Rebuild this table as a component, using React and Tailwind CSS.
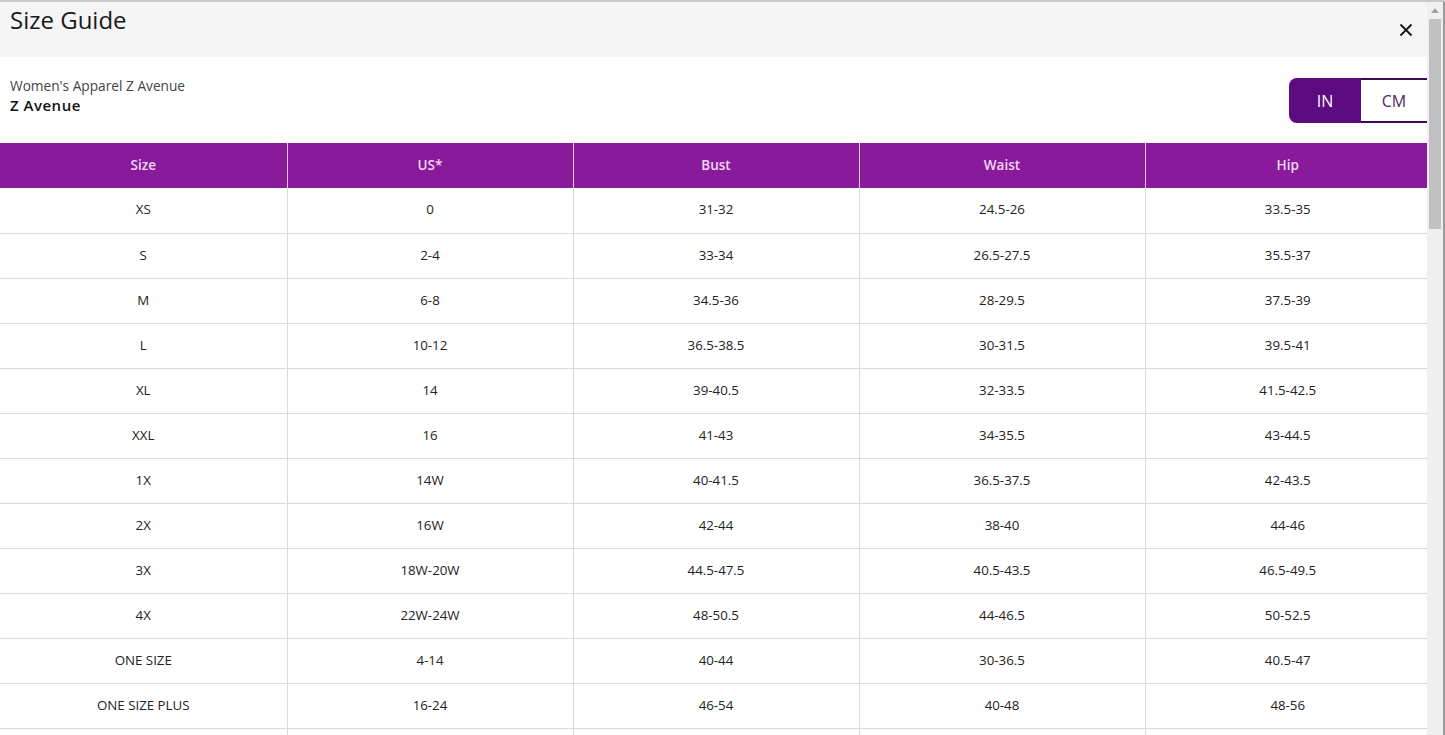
import React from "react";

const rows = [
  ["XS", "0", "31-32", "24.5-26", "33.5-35"],
  ["S", "2-4", "33-34", "26.5-27.5", "35.5-37"],
  ["M", "6-8", "34.5-36", "28-29.5", "37.5-39"],
  ["L", "10-12", "36.5-38.5", "30-31.5", "39.5-41"],
  ["XL", "14", "39-40.5", "32-33.5", "41.5-42.5"],
  ["XXL", "16", "41-43", "34-35.5", "43-44.5"],
  ["1X", "14W", "40-41.5", "36.5-37.5", "42-43.5"],
  ["2X", "16W", "42-44", "38-40", "44-46"],
  ["3X", "18W-20W", "44.5-47.5", "40.5-43.5", "46.5-49.5"],
  ["4X", "22W-24W", "48-50.5", "44-46.5", "50-52.5"],
  ["ONE SIZE", "4-14", "40-44", "30-36.5", "40.5-47"],
  ["ONE SIZE PLUS", "16-24", "46-54", "40-48", "48-56"],
  ["", "", "", "", ""],
];

const heads = ["Size", "US*", "Bust", "Waist", "Hip"];

export default function App() {
  return (
    <div
      className="h-[735px] w-[1445px] overflow-hidden bg-white border-t-2 border-[#c9c9c9] flex"
      style={{ fontFamily: "'Open Sans', Lato, sans-serif" }}
    >
      <div className="flex-1 flex flex-col min-w-0 overflow-hidden">
        <div className="h-[55px] bg-[#f5f5f5] flex justify-between items-start shrink-0">
          <div className="pl-[10px] pt-[2px] text-[24px] leading-[32px] text-[#1a1a1a]">Size Guide</div>
          <div className="pt-[20px] pr-[13px]">
            <svg width="16" height="16" viewBox="0 0 16 16" fill="none" stroke="#111" strokeWidth="1.8">
              <path d="M2.5 2.5 L13.5 13.5 M13.5 2.5 L2.5 13.5" />
            </svg>
          </div>
        </div>
        <div className="h-[86px] flex justify-between items-start shrink-0">
          <div className="pl-[10px] pt-[20px]">
            <div className="text-[13.7px] leading-[18px] text-[#444]">Women's Apparel Z Avenue</div>
            <div className="text-[15px] leading-[20px] font-semibold text-[#111] tracking-[0.5px]">Z Avenue</div>
          </div>
          <div className="mt-[21px] flex h-[45px]">
            <div className="w-[72px] bg-[#5c0b80] rounded-l-[8px] flex items-center justify-center text-white text-[16px]">IN</div>
            <div className="w-[66px] border-y-2 border-[#3d0a55] flex items-center justify-center text-[#4f2a66] text-[16px]">CM</div>
          </div>
        </div>
        <table className="w-[1430px] table-fixed border-collapse shrink-0">
          <colgroup>
            <col className="w-[287px]" />
            <col className="w-[286px]" />
            <col className="w-[286px]" />
            <col className="w-[286px]" />
            <col className="w-[285px]" />
          </colgroup>
          <thead>
            <tr className="h-[45px] bg-[#8a1a9c]">
              {heads.map((h, i) => (
                <th
                  key={i}
                  className={`text-[13.5px] font-semibold text-[#f3d9f7] text-center ${i < 4 ? "border-r border-[#e6c8ec]" : ""}`}
                >
                  {h}
                </th>
              ))}
            </tr>
          </thead>
          <tbody>
            {rows.map((r, ri) => (
              <tr key={ri} className="h-[45px] border-b border-[#dadada]">
                {r.map((c, ci) => (
                  <td
                    key={ci}
                    className={`text-[13.3px] text-[#222] text-center ${ci < 4 ? "border-r border-[#dadada]" : ""}`}
                  >
                    {c}
                  </td>
                ))}
              </tr>
            ))}
          </tbody>
        </table>
      </div>
      <div className="w-[18px] shrink-0 bg-[#f0f0f0] flex flex-col items-center border-r-2 border-[#9a9a9a]">
        <div className="h-[17px] flex items-center justify-center">
          <svg width="8" height="5" viewBox="0 0 8 5">
            <path d="M0 5 L4 0 L8 5 Z" fill="#a3a3a3" />
          </svg>
        </div>
        <div className="w-[12px] h-[210px] bg-[#c1c1c1]" />
      </div>
    </div>
  );
}
